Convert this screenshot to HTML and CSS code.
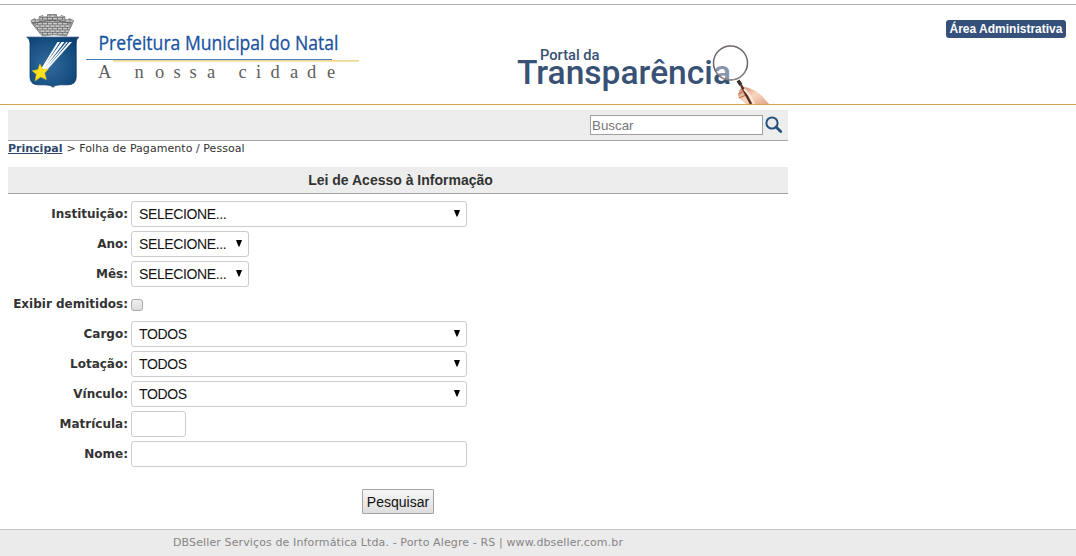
FILE: index.html
```html
<!DOCTYPE html>
<html lang="pt-BR">
<head>
<meta charset="utf-8">
<title>Portal da Transparência</title>
<link rel="stylesheet" href="styles.css">
</head>
<body>
<header class="header">
  <svg class="brand" width="376" height="99" viewBox="0 5 376 99">
    <defs>
      <radialGradient id="shield" cx=".42" cy=".55" r=".7"><stop offset="0" stop-color="#326a9b"/><stop offset=".6" stop-color="#195386"/><stop offset="1" stop-color="#083e72"/></radialGradient>
      <pattern id="bricks" width="5" height="5" patternUnits="userSpaceOnUse"><rect width="5" height="5" fill="#6a6a6a"/><path d="M.4 .3h4.200v1.600h-4.200zM-2 2.800h4.100v1.600h-4.100zM2.900 2.800h4.100v1.600h-4.100z" fill="#c8c8c8"/></pattern>
    </defs>
    <path d="M31 20.500L35 18.500 36.500 20 39.500 18.800 39 16.800 43 15.500 44.500 17.200 47.500 16.500 47.500 14.500H56.500V16.500L59.500 17.200 61 15.500 65 16.800 64.500 18.800 67.500 20 69 18.500 73.500 20.500 72.500 23.500 67.500 34 66.500 36Q54 33.500 42.500 36L40.500 34 32 23.500Z" fill="url(#bricks)" stroke="#777" stroke-width=".8"/>
    <path d="M33 23.500Q52 17.500 71.500 23.500" fill="none" stroke="#555" stroke-width=".9"/>
    <path d="M26.800 37.200H78.700Q76.200 39 76.200 43V77Q76.200 84.500 68 84.800H60Q55 84.800 53 87.200 51 84.800 45 84.800H38Q30 84.500 30 77V43Q30 39 26.800 37.200Z" fill="url(#shield)" stroke="#0b3765" stroke-width=".8"/>
    <path d="M41 69L57.500 42H60L43 68ZM42 69L61.500 42H64.500L44 69ZM43 70L66.500 42H68L45 70ZM44 71L69.500 42H72L47 70Z" fill="#fff"/>
    <path d="M39.800 63.800L42.700 69.300 48.500 69 44.700 73 46.500 79.800 40.800 77 35 81 36.300 74.300 32 70.700 38 69.600Z" fill="#ffe21a" stroke="#e1b21c" stroke-width=".4"/>
    <text class="city" x="98.500" y="49.500" textLength="240" lengthAdjust="spacingAndGlyphs">Prefeitura Municipal do Natal</text>
    <rect x="113" y="60" width="246" height="1.700" fill="#f2d78f"/>
    <rect x="86" y="59" width="246" height="1" fill="#3f7dbb"/>
    <text class="motto" y="78"><tspan x="98">A</tspan><tspan x="134.500">n</tspan><tspan x="155">o</tspan><tspan x="173.500">s</tspan><tspan x="189.500">s</tspan><tspan x="207">a</tspan><tspan x="238.500">c</tspan><tspan x="256">i</tspan><tspan x="270.500">d</tspan><tspan x="290">a</tspan><tspan x="307">d</tspan><tspan x="327">e</tspan></text>
  </svg>
  <svg class="portal" width="298" height="99" viewBox="492 5 298 99">
    <defs>
      <linearGradient id="skin" x1="0" y1="0" x2="1" y2="1"><stop offset="0" stop-color="#cf8463"/><stop offset=".5" stop-color="#f7d7c2"/><stop offset="1" stop-color="#e1a583"/></linearGradient>
    </defs>
    <text class="portal-small" x="540" y="60" textLength="59.500" lengthAdjust="spacingAndGlyphs">Portal da</text>
    <text class="portal-large" x="517" y="83.500" textLength="214" lengthAdjust="spacingAndGlyphs">Transparência</text>
    <circle cx="730.500" cy="63" r="17" fill="#fff" fill-opacity=".4" stroke="#6f6665" stroke-width="1.500"/>
    <path d="M716.500 72.500A17 17 0 0 0 746 70" fill="none" stroke="#aaa09d" stroke-width=".6"/>
    <path d="M738 80.500L741 85" stroke="#3c302f" stroke-width="3.500"/>
    <path d="M739 91L742 86.500 749 88Q757 91 762 96L769 104H746L739 98Q737 95 739 93Z" fill="url(#skin)"/>
    <path d="M738 94L743 92M739 98L746 95M743 87L747 94" stroke="#bc6c50" fill="none"/>
    <path d="M741 85L751 104" stroke="#572d23" stroke-width="2.400"/>
    <path d="M744 89L750 96 754 104" stroke="#ffe7d6" stroke-width="2" fill="none"/>
  </svg>
  <a class="admin">Área Administrativa</a>
</header>
<main class="content">
  <div class="searchbar">
    <input class="search" type="text" placeholder="Buscar">
    <svg class="lens" width="18" height="18" viewBox="0 0 18 18"><circle cx="7" cy="7" r="5.600" fill="none" stroke="#24527d" stroke-width="2"/><path d="M11 11L15.700 15.500" stroke="#24527d" stroke-width="2.800" stroke-linecap="round"/></svg>
  </div>
  <nav class="crumbs"><a class="home">Principal</a><span class="trail">&gt; Folha de Pagamento / Pessoal</span></nav>
  <h1 class="title">Lei de Acesso à Informação</h1>
  <form class="form">
    <label class="label">Instituição:</label>
    <div class="pick wide"><select class="field"><option>SELECIONE...</option></select><svg class="arrow" width="6" height="7"><path d="M0 0H6L3.500 6.500H2.500Z"/></svg></div>
    <label class="label">Ano:</label>
    <div class="pick narrow"><select class="field"><option>SELECIONE...</option></select><svg class="arrow" width="6" height="7"><path d="M0 0H6L3.500 6.500H2.500Z"/></svg></div>
    <label class="label">Mês:</label>
    <div class="pick narrow"><select class="field"><option>SELECIONE...</option></select><svg class="arrow" width="6" height="7"><path d="M0 0H6L3.500 6.500H2.500Z"/></svg></div>
    <label class="label">Exibir demitidos:</label>
    <input class="check" type="checkbox">
    <label class="label">Cargo:</label>
    <div class="pick wide"><select class="field"><option>TODOS</option></select><svg class="arrow" width="6" height="7"><path d="M0 0H6L3.500 6.500H2.500Z"/></svg></div>
    <label class="label">Lotação:</label>
    <div class="pick wide"><select class="field"><option>TODOS</option></select><svg class="arrow" width="6" height="7"><path d="M0 0H6L3.500 6.500H2.500Z"/></svg></div>
    <label class="label">Vínculo:</label>
    <div class="pick wide"><select class="field"><option>TODOS</option></select><svg class="arrow" width="6" height="7"><path d="M0 0H6L3.500 6.500H2.500Z"/></svg></div>
    <label class="label">Matrícula:</label>
    <div class="pick short"><input class="field" type="text"></div>
    <label class="label">Nome:</label>
    <div class="pick wide"><input class="field" type="text"></div>
  </form>
  <div class="actions"><button class="submit" type="button">Pesquisar</button></div>
</main>
<footer class="footer"><span class="credit">DBSeller Serviços de Informática Ltda. - Porto Alegre - RS | www.dbseller.com.br</span></footer>
</body>
</html>
```

FILE: styles.css
```css
* { box-sizing: border-box; }
body {
  margin: 0;
  padding-top: 4px;
  height: 556px;
  overflow: hidden;
  background: #fff;
  font-family: "DejaVu Sans", sans-serif;
  color: #333;
}
.header {
  height: 101px;
  border-top: 1px solid #b4b4b4;
  border-bottom: 1px solid #d9a44f;
  display: flex;
  align-items: flex-start;
}
.brand, .portal { display: block; flex: none; overflow: visible; }
.portal { margin-left: 116px; }
.city { font: 20.5px "Open Sans", sans-serif; fill: #1752a0; stroke: #1752a0; stroke-width: .3; }
.motto { font: 18.5px "Liberation Serif", serif; fill: #606060; }
.portal-small { font: 500 15.5px Roboto, sans-serif; fill: #385174; }
.portal-large { font: 500 33px Roboto, sans-serif; fill: #385174; }
.admin {
  margin: 15px 10px 0 auto;
  width: 120px;
  height: 18px;
  border-radius: 3px;
  background: #35507a;
  color: #fff;
  font: bold 12px/18px "Liberation Sans", sans-serif;
  text-align: center;
  white-space: nowrap;
}
.content { width: 780px; margin: 5px 0 0 8px; }
.searchbar {
  height: 31px;
  background: #ededed;
  border-bottom: 1px solid #a3a3a3;
  display: flex;
  justify-content: flex-end;
  padding: 5px 5px 0 0;
}
.search {
  width: 173px;
  height: 20px;
  margin-right: 2px;
  padding: 1px;
  border: 1px solid #a0a0a0;
  background: #fff;
  font: 13.33px "Liberation Sans", sans-serif;
}
.search::placeholder { color: #777; }
.lens { margin-top: 1px; }
.crumbs {
  height: 26px;
  font-size: 11px;
  line-height: 16px;
  display: flex;
  gap: 4px;
  white-space: nowrap;
}
.home { font-weight: bold; color: #30496d; text-decoration: underline; }
.trail { letter-spacing: .05px; }
.title {
  margin: 0;
  height: 27px;
  padding-left: 5px;
  background: #ededed;
  border-bottom: 1px solid #a3a3a3;
  font: bold 14px/27px "Liberation Sans", sans-serif;
  text-align: center;
}
.form {
  margin: 7px 0 0;
  display: grid;
  grid-template-columns: 120px 336px;
  column-gap: 3px;
  grid-auto-rows: 26px;
  row-gap: 4px;
}
.label {
  text-align: right;
  font-size: 12px;
  font-weight: bold;
  line-height: 27px;
  white-space: nowrap;
}
.pick { position: relative; height: 26px; }
.wide { width: 336px; }
.narrow { width: 118px; }
.short { width: 55px; }
.field {
  appearance: none;
  display: block;
  width: 100%;
  height: 26px;
  margin: 0;
  padding: 0 7px;
  border: 1px solid #ccc;
  border-radius: 3px;
  background: #fff;
  color: #111;
  font: 14px "Liberation Sans", sans-serif;
  letter-spacing: -.38px;
}
.arrow { position: absolute; right: 7px; top: 9px; }
.check {
  appearance: none;
  width: 12px;
  height: 12px;
  margin: 8px 0 0;
  border: 1px solid #aaa;
  border-radius: 3px;
  background: linear-gradient(#eee, #ddd);
}
.actions { margin-top: 22px; display: flex; justify-content: center; }
.submit {
  width: 72px;
  height: 25px;
  padding: 0;
  border: 1px solid #a3a3a3;
  border-radius: 1px;
  background: linear-gradient(#f6f6f6, #dedede);
  color: #111;
  font: 14px "Liberation Sans", sans-serif;
}
.footer {
  margin-top: 15px;
  height: 28px;
  padding-left: 173px;
  border-top: 1px solid #c4c4c4;
  background: #ebebeb;
  color: #858585;
  font-size: 11px;
  letter-spacing: .12px;
  line-height: 25px;
}
```
